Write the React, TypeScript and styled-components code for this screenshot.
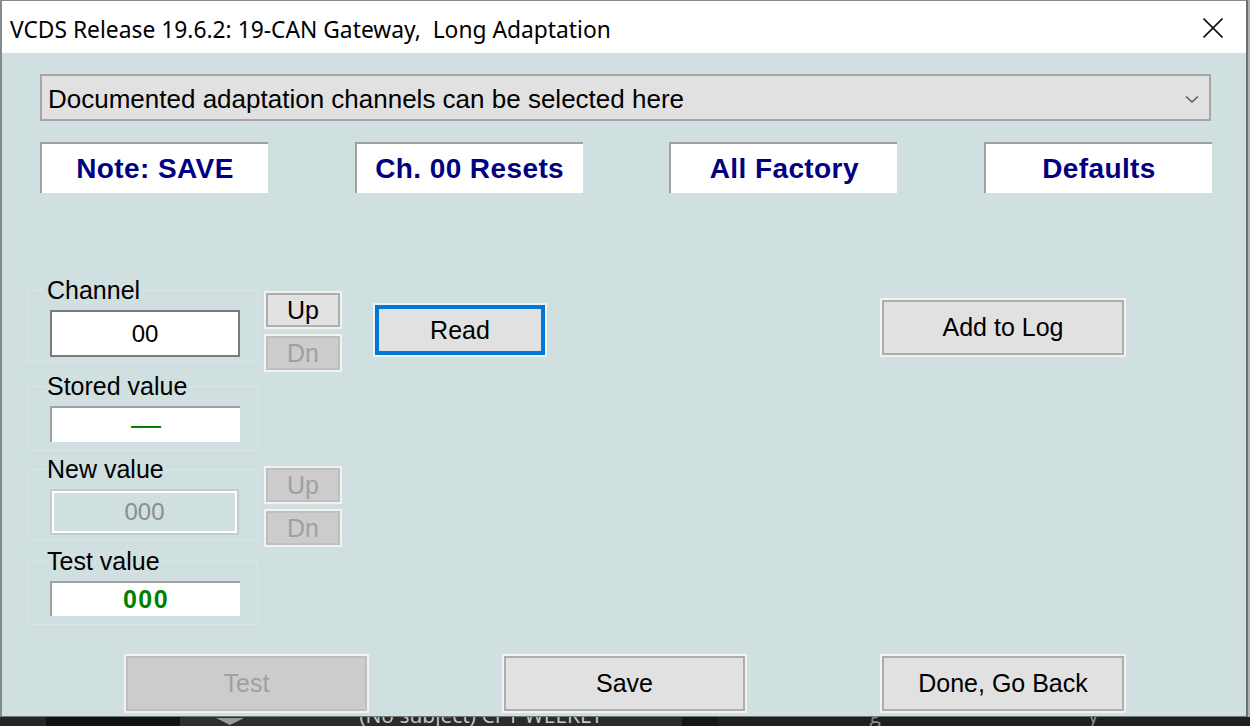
import React from 'react';
import styled, { createGlobalStyle, css } from 'styled-components';

const GlobalStyle = createGlobalStyle`
  html, body { margin: 0; padding: 0; background: #1c1c1c; }
  body {
    width: 1250px;
    height: 726px;
    overflow: hidden;
    font-family: "Liberation Sans", Arial, sans-serif;
  }
  * { box-sizing: border-box; }
`;

type BtnState = 'normal' | 'disabled' | 'focus';
type FieldKind = 'channel' | 'stored' | 'new' | 'test';

export default function App() {
    return (
        <Screen>
            <GlobalStyle />
            <Window>
                <TitleBar>
                    <Title>VCDS Release 19.6.2: 19-CAN Gateway,  Long Adaptation</Title>
                    <CloseIcon viewBox="0 0 20 20">
                        <path d="M0.5 0.5 L19.5 19.5 M19.5 0.5 L0.5 19.5" stroke="#111" strokeWidth="1.6" />
                    </CloseIcon>
                </TitleBar>
                <Body>
                    <Dropdown>
                        <span>Documented adaptation channels can be selected here</span>
                        <svg width="14" height="9" viewBox="0 0 14 9">
                            <path d="M1 1.5 L7 7 L13 1.5" stroke="#5a5a5a" strokeWidth="1.6" fill="none" />
                        </svg>
                    </Dropdown>
                    <NotesRow>
                        <NoteBox>Note: SAVE</NoteBox>
                        <NoteBox>Ch. 00 Resets</NoteBox>
                        <NoteBox>All Factory</NoteBox>
                        <NoteBox>Defaults</NoteBox>
                    </NotesRow>
                    <MainRow>
                        <LeftCol>
                            <SectionRow>
                                <GroupBox>
                                    <Caption>Channel</Caption>
                                    <Frame $pb={4}>
                                        <Field $kind="channel">00</Field>
                                    </Frame>
                                </GroupBox>
                                <UpDn $top={16}>
                                    <Button $w={78} $h={38} $state="normal">Up</Button>
                                    <Button $w={78} $h={38} $state="disabled">Dn</Button>
                                </UpDn>
                            </SectionRow>
                            <SectionRow $mt={-1}>
                                <GroupBox>
                                    <Caption>Stored value</Caption>
                                    <Frame $pb={8}>
                                        <Field $kind="stored"><Dash>—</Dash></Field>
                                    </Frame>
                                </GroupBox>
                            </SectionRow>
                            <SectionRow $mt={3}>
                                <GroupBox>
                                    <Caption>New value</Caption>
                                    <Frame $pb={4}>
                                        <Field $kind="new">000</Field>
                                    </Frame>
                                </GroupBox>
                                <UpDn $top={12}>
                                    <Button $w={78} $h={38} $state="disabled">Up</Button>
                                    <Button $w={78} $h={38} $state="disabled">Dn</Button>
                                </UpDn>
                            </SectionRow>
                            <SectionRow $mt={-1}>
                                <GroupBox>
                                    <Caption>Test value</Caption>
                                    <Frame $pb={8}>
                                        <Field $kind="test">000</Field>
                                    </Frame>
                                </GroupBox>
                            </SectionRow>
                        </LeftCol>
                        <Button $w={174} $h={54} $state="focus" $ml={31} $mt={28}>Read</Button>
                        <Button $w={246} $h={59} $state="normal" $ml={333} $mt={23}>Add to Log</Button>
                    </MainRow>
                    <BottomRow>
                        <Button $w={245} $h={59} $state="disabled" $ml={96}>Test</Button>
                        <Button $w={245} $h={59} $state="normal" $ml={133}>Save</Button>
                        <Button $w={246} $h={59} $state="normal" $ml={133}>Done, Go Back</Button>
                    </BottomRow>
                </Body>
            </Window>
            <Taskbar>
                <TaskSeg $w={46} $bg="#262626" />
                <TaskSeg $w={134} $bg="#121212" />
                <TaskSeg $w={100} $bg="#2e2e2e">
                    <Triangle />
                </TaskSeg>
                <TaskSeg $w={402} $bg="#2b2b2b">
                    <TaskText>(No subject) CPT WEEKLY</TaskText>
                </TaskSeg>
                <TaskSeg $w={36} $bg="#161616" />
                <TaskSeg $w={532} $bg="#1f1f1f">
                    <TaskText $dim>g                                      y</TaskText>
                </TaskSeg>
            </Taskbar>
        </Screen>
    );
}

const Screen = styled.div`
    width: 1250px;
    height: 726px;
    display: flex;
    flex-direction: column;
    background: #1c1c1c;
`;

const Window = styled.div`
    flex-shrink: 0;
    width: 1248px;
    height: 717px;
    display: flex;
    flex-direction: column;
    background: #d0dfe0;
    border-top: 1px solid #858b8b;
    border-bottom: 1px solid #6f7777;
    border-left: 2px solid #858b8b;
    border-right: 2px solid #667070;
    box-shadow: 2px 0 0 #a9b2b2;
`;

const TitleBar = styled.div`
    height: 52px;
    flex-shrink: 0;
    background: #ffffff;
    display: flex;
    align-items: center;
    justify-content: space-between;
    padding: 4px 23px 0 8px;
`;

const Title = styled.div`
    font-family: "Noto Sans", "Open Sans", sans-serif;
    font-size: 22.8px;
    color: #000;
    white-space: pre;
`;

const CloseIcon = styled.svg`
    width: 20px;
    height: 20px;
    margin-bottom: 3px;
`;

const Body = styled.div`
    flex: 1;
    display: flex;
    flex-direction: column;
    padding: 0 0 3px 26px;
`;

const Dropdown = styled.div`
    margin: 21px 0 0 12px;
    width: 1171px;
    height: 47px;
    background: #e1e1e1;
    border: 2px solid #a6a6a6;
    display: flex;
    align-items: center;
    justify-content: space-between;
    padding: 3px 10px 0 6px;
    font-size: 26px;
    color: #000;
`;

const NotesRow = styled.div`
    margin: 21px 0 0 12px;
    width: 1172px;
    display: flex;
    justify-content: space-between;
`;

const NoteBox = styled.div`
    width: 228px;
    height: 51px;
    background: #fff;
    border-top: 2px solid #a0a0a0;
    border-left: 2px solid #a0a0a0;
    display: flex;
    align-items: center;
    justify-content: center;
    font-weight: bold;
    font-size: 28px;
    letter-spacing: 0.4px;
    color: #000080;
`;

const MainRow = styled.div`
    margin-top: 82px;
    display: flex;
    align-items: flex-start;
`;

const LeftCol = styled.div`
    width: 314px;
    display: flex;
    flex-direction: column;
`;

const SectionRow = styled.div<{ $mt?: number }>`
    display: flex;
    align-items: flex-start;
    gap: 6px;
    margin-top: ${p => p.$mt ?? 0}px;
`;

const GroupBox = styled.div`
    width: 230px;
    display: flex;
    flex-direction: column;
`;

const Caption = styled.div`
    position: relative;
    z-index: 1;
    align-self: flex-start;
    margin-left: 17px;
    padding: 0 2px;
    height: 30px;
    line-height: 30px;
    font-size: 25px;
    color: #000;
    background: #d0dfe0;
`;

const Frame = styled.div<{ $pb: number }>`
    margin-top: -15px;
    border: 1px solid #dce7e7;
    padding: 19px 0 ${p => p.$pb}px 21px;
`;

const fieldKinds = {
    channel: css`
        height: 47px;
        border: 2px solid #7a7a7a;
        color: #000;
    `,
    stored: css`
        height: 36px;
        border-top: 2px solid #a0a0a0;
        border-left: 2px solid #a0a0a0;
        color: #008000;
    `,
    new: css`
        width: 189px;
        height: 46px;
        background: transparent;
        border: 2px solid #c4cccc;
        box-shadow: inset 0 0 0 2px #fff;
        color: #8c8c8c;
    `,
    test: css`
        height: 35px;
        border-top: 2px solid #a0a0a0;
        border-left: 2px solid #a0a0a0;
        color: #008000;
        font-weight: bold;
        font-size: 25px;
        letter-spacing: 1.5px;
    `,
};

const Field = styled.div<{ $kind: FieldKind }>`
    width: 190px;
    display: flex;
    align-items: center;
    justify-content: center;
    font-size: 24px;
    background: #fff;
    ${p => fieldKinds[p.$kind]}
`;

const Dash = styled.span`
    font-size: 30px;
    line-height: 1;
`;

const UpDn = styled.div<{ $top: number }>`
    display: flex;
    flex-direction: column;
    gap: 5px;
    margin-top: ${p => p.$top}px;
`;

const btnStates = {
    normal: css`
        background: #e1e1e1;
        box-shadow: inset 0 0 0 2px #adadad;
        color: #000;
    `,
    disabled: css`
        background: #cccccc;
        box-shadow: inset 0 0 0 2px #bfbfbf;
        color: #a0a0a0;
    `,
    focus: css`
        background: #e1e1e1;
        box-shadow: inset 0 0 0 4px #0078d7;
        color: #000;
    `,
};

const Button = styled.button<{ $w: number; $h: number; $state: BtnState; $ml?: number; $mt?: number }>`
    flex-shrink: 0;
    width: ${p => p.$w}px;
    height: ${p => p.$h}px;
    margin-left: ${p => p.$ml ?? 0}px;
    margin-top: ${p => p.$mt ?? 0}px;
    padding: 0;
    border: 2px solid #f2f2f2;
    display: flex;
    align-items: center;
    justify-content: center;
    font-family: "Liberation Sans", Arial, sans-serif;
    font-size: 25px;
    ${p => btnStates[p.$state]}
`;

const BottomRow = styled.div`
    margin-top: auto;
    display: flex;
`;

const Taskbar = styled.div`
    flex: 1;
    display: flex;
    overflow: hidden;
    background: #1f1f1f;
`;

const TaskSeg = styled.div<{ $w: number; $bg: string }>`
    width: ${p => p.$w}px;
    flex-shrink: 0;
    background: ${p => p.$bg};
    display: flex;
    justify-content: center;
    overflow: hidden;
`;

const Triangle = styled.div`
    margin-top: 1px;
    width: 0;
    height: 0;
    border-left: 14px solid transparent;
    border-right: 14px solid transparent;
    border-top: 7px solid #9a9a9a;
`;

const TaskText = styled.div<{ $dim?: boolean }>`
    margin-top: -14px;
    font-family: "Open Sans", sans-serif;
    font-size: 21px;
    line-height: 24px;
    white-space: pre;
    color: ${p => (p.$dim ? '#8a8a8a' : '#c8c8c8')};
`;
